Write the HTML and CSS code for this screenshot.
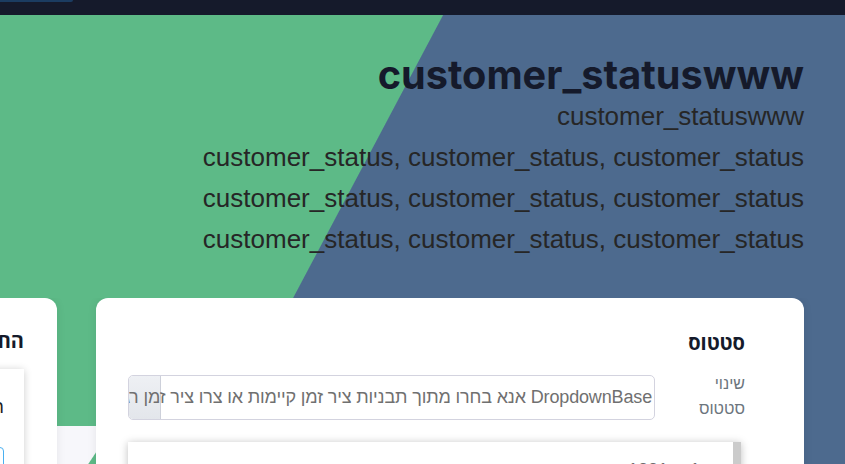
FILE: index.html
```html
<!DOCTYPE html>
<html lang="he">
<head>
<meta charset="utf-8">
<title>customer_statuswww</title>
<link rel="stylesheet" href="styles.css">
</head>
<body>
<div class="topbar"><div class="topbar-tab"></div></div>
<main class="page" dir="rtl">
  <header class="hero-text">
    <h1 class="title" dir="ltr">customer_statuswww</h1>
    <p class="sub" dir="ltr">customer_statuswww</p>
    <p class="sub" dir="ltr">customer_status, customer_status, customer_status</p>
    <p class="sub" dir="ltr">customer_status, customer_status, customer_status</p>
    <p class="sub" dir="ltr">customer_status, customer_status, customer_status</p>
  </header>
  <div class="cards">
    <section class="card card-main">
      <h2 class="card-title">סטטוס</h2>
      <div class="field">
        <label class="field-label">שינוי סטטוס</label>
        <div class="select">
          <span class="select-handle"></span>
          <span class="select-text">DropdownBase אנא בחרו מתוך תבניות ציר זמן קיימות או צרו ציר זמן רגיל חדש</span>
        </div>
      </div>
      <div class="list">
        <div class="list-row"><span class="list-num">1</span><span class="list-val">1231</span></div>
      </div>
    </section>
    <section class="card card-side">
      <h2 class="card-title">החלפת סטטוס</h2>
      <div class="sub-card">
        <p class="sub-card-text">הערות לשינוי</p>
        <div class="sub-input"></div>
      </div>
    </section>
  </div>
</main>
</body>
</html>
```
FILE: styles.css
```css
html, body {
  margin: 0;
  padding: 0;
}
body {
  font-family: "Liberation Sans", Arial, sans-serif;
  background: #ffffff;
  overflow: hidden;
  width: 845px;
  height: 464px;
}
.topbar {
  height: 15px;
  background: #151a2b;
}
.topbar-tab {
  width: 73px;
  height: 2px;
  background: #1b3c61;
  border-radius: 0 0 4px 0;
}
.page {
  min-height: 460px;
  background:
    linear-gradient(117.93deg, #5dba87 391px, #4d6a8e 392px) 0 0 / 100% 411px no-repeat,
    linear-gradient(123.7deg, #f7f7fb 94px, #5dba87 95px, #5dba87 400px, #4d6a8e 401px) 0 411px / 100% 100% no-repeat;
}
.hero-text {
  padding: 39px 41px 0 0;
}
.title {
  margin: 0;
  font-family: Inter, "Open Sans", sans-serif;
  font-weight: 700;
  font-size: 39.7px;
  line-height: 42px;
  color: #151a2b;
  text-align: right;
}
.sub {
  margin: 0;
  font-size: 26px;
  line-height: 41px;
  color: #262626;
  text-align: right;
}
.cards {
  display: flex;
  gap: 39px;
  margin-top: 38px;
  padding-right: 41px;
  overflow: hidden;
  align-items: flex-start;
}
.card {
  flex: none;
  background: #ffffff;
  border-radius: 12px;
  box-shadow: 0 0 10px rgba(0, 0, 0, 0.08);
  box-sizing: border-box;
  min-height: 260px;
}
.card-main {
  width: 708px;
  padding: 33px 59px 20px 32px;
}
.card-side {
  width: 420px;
  padding: 31px 33px 20px 33px;
}
.card-title {
  margin: 0 0 16px;
  font-family: "Open Sans", "Liberation Sans", sans-serif;
  font-weight: 700;
  font-size: 20px;
  line-height: 24px;
  color: #151a2b;
}
.field {
  display: flex;
  gap: 35px;
  align-items: flex-start;
}
.field-label {
  flex: none;
  width: 55px;
  font-size: 16px;
  line-height: 25px;
  color: #6c757d;
}
.select {
  flex: 1;
  position: relative;
  margin-top: 4px;
  height: 45px;
  box-sizing: border-box;
  border: 1px solid #d3d3df;
  border-radius: 5px;
  overflow: hidden;
  white-space: nowrap;
  padding: 0 2px 0 2px;
  font-size: 18px;
  line-height: 43px;
  color: #707070;
}
.select-handle {
  position: absolute;
  left: 0;
  top: 0;
  bottom: 0;
  width: 31px;
  background: linear-gradient(#eef0f4, #e3e6eb);
  border-right: 1px solid #cdd0da;
  border-radius: 4px 0 0 4px;
}
.select-text {
  position: relative;
  letter-spacing: -0.15px;
}
.list {
  margin: 21px 4px 0 0;
  height: 120px;
  background: #ffffff;
  border-right: 8px solid #cbcbcb;
  box-shadow: 0 1px 8px rgba(0, 0, 0, 0.25);
}
.list-row {
  display: flex;
  gap: 22px;
  padding: 17px 33px 0 0;
  font-size: 18px;
  line-height: 22px;
  color: #6c6c6c;
}
.sub-card {
  background: #ffffff;
  box-shadow: 0 1px 8px rgba(0, 0, 0, 0.2);
  padding: 27px 20px 20px;
}
.sub-card-text {
  margin: 0;
  font-size: 18px;
  line-height: 22px;
  color: #222222;
}
.sub-input {
  margin-top: 29px;
  height: 40px;
  border: 1px solid #4ab0f0;
  border-radius: 4px;
}
```
